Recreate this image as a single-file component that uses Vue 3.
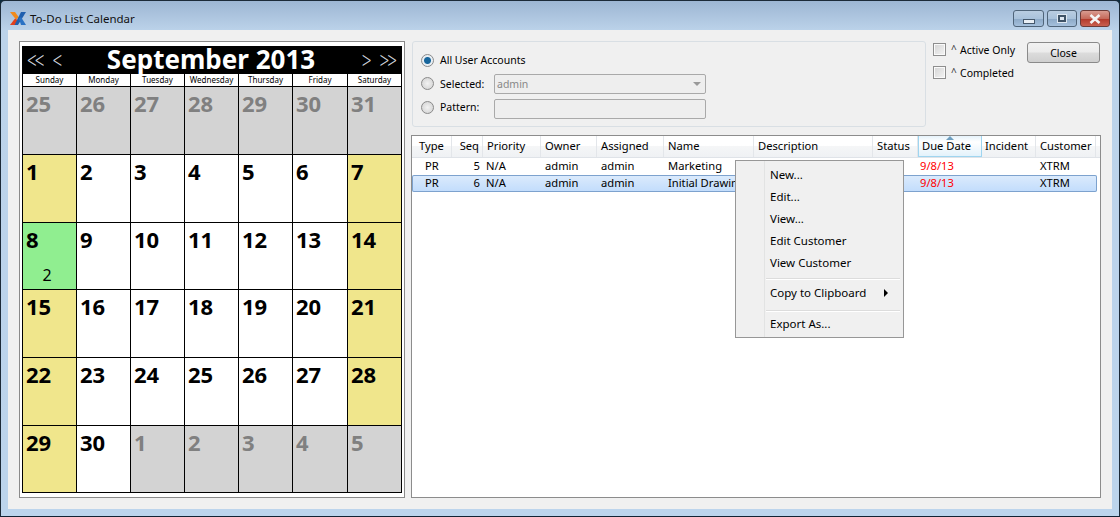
<template>
  <div class="window">
    <header class="titlebar">
      <svg class="logo" width="16" height="13" viewBox="0 0 16 14" preserveAspectRatio="none">
        <path d="M0 0h5l4 6-3 2z" fill="#f08a1c" />
        <path d="M0 14l5-7 3 2-3 5z" fill="#e2401c" />
        <path d="M16 0h-5L4.500 14h3.500z" fill="#1f5fae" />
        <path d="M9 7l2-1.500 5 8.500h-5z" fill="#2a72c4" />
      </svg>
      <span class="title">To-Do List Calendar</span>
      <div class="controls">
        <button class="ctl" type="button"><i class="min"></i></button>
        <button class="ctl ctl-max" type="button"><i class="max"></i></button>
        <button class="ctl close-x" type="button">
          <svg width="12" height="10" viewBox="0 0 12 10"><path d="M1.500 1l9 8M10.500 1l-9 8" stroke="#f4f4f4" stroke-width="2.600" /></svg>
        </button>
      </div>
    </header>

    <main class="body">
      <section class="cal-panel">
        <div class="calendar">
          <div class="cal-head">
            <div class="nav"><span class="dbl">&lt;&lt;</span><span>&lt;</span></div>
            <div class="month">September 2013</div>
            <div class="nav"><span>&gt;</span><span class="dbl">&gt;&gt;</span></div>
          </div>
          <div class="day-names">
            <div v-for="d in dayNames" :key="d">{{ d }}</div>
          </div>
          <div class="days">
            <div v-for="c in cells" :key="c.key" class="day" :class="c.kind">
              <span class="num">{{ c.n }}</span>
              <span v-if="c.count" class="count">{{ c.count }}</span>
            </div>
          </div>
        </div>
      </section>

      <section class="right">
        <div class="top">
          <div class="group">
            <div class="radio-row first">
              <span class="radio on"></span><label>All User Accounts</label>
            </div>
            <div class="radio-row">
              <span class="radio"></span><label class="lab">Selected:</label>
              <div class="field">admin<i class="caret"></i></div>
            </div>
            <div class="radio-row">
              <span class="radio up"></span><label class="lab up">Pattern:</label>
              <div class="field"></div>
            </div>
          </div>
          <div class="checks">
            <div class="check"><span class="box"></span><span class="hat">^</span>Active Only</div>
            <div class="check"><span class="box"></span><span class="hat">^</span>Completed</div>
          </div>
          <button class="close-btn" type="button">Close</button>
        </div>

        <div class="table">
          <div class="thead">
            <div
              v-for="c in columns"
              :key="c.name"
              class="th"
              :class="{ sorted: c.name === 'Due Date' }"
              :style="{ width: c.w + 'px' }"
            >{{ c.name }}</div>
          </div>
          <div
            v-for="r in rows"
            :key="r.seq"
            class="tr"
            :class="{ selected: r.selected }"
          >
            <div class="td c-type" style="width: 40px">PR</div>
            <div class="td c-seq" style="width: 31px">{{ r.seq }}</div>
            <div class="td" style="width: 58px">N/A</div>
            <div class="td pad" style="width: 56px">admin</div>
            <div class="td pad" style="width: 67px">admin</div>
            <div class="td pad" style="width: 90px">{{ r.name }}</div>
            <div class="td" style="width: 119px"></div>
            <div class="td" style="width: 45px"></div>
            <div class="td due" style="width: 64px">9/8/13</div>
            <div class="td" style="width: 54px"></div>
            <div class="td pad" style="width: 57px">XTRM</div>
          </div>

          <div class="menu">
            <template v-for="m in menu" :key="m.label">
              <div v-if="m.sep" class="sep" :class="m.sep"></div>
              <div class="item">
                {{ m.label }}
                <i v-if="m.sub" class="arrow"></i>
              </div>
            </template>
          </div>
        </div>
      </section>
    </main>
  </div>
</template>

<script setup>
const dayNames = ['Sunday', 'Monday', 'Tuesday', 'Wednesday', 'Thursday', 'Friday', 'Saturday']

const columns = [
  { name: 'Type', w: 40 },
  { name: 'Seq', w: 31 },
  { name: 'Priority', w: 58 },
  { name: 'Owner', w: 56 },
  { name: 'Assigned', w: 67 },
  { name: 'Name', w: 90 },
  { name: 'Description', w: 119 },
  { name: 'Status', w: 45 },
  { name: 'Due Date', w: 64 },
  { name: 'Incident', w: 54 },
  { name: 'Customer', w: 60 }
]

const rows = [
  { seq: 5, name: 'Marketing' },
  { seq: 6, name: 'Initial Drawing', selected: true }
]

const menu = [
  { label: 'New...' },
  { label: 'Edit...' },
  { label: 'View...' },
  { label: 'Edit Customer' },
  { label: 'View Customer' },
  { label: 'Copy to Clipboard', sep: 'sep-a', sub: true },
  { label: 'Export As...', sep: 'sep-b' }
]

// 6 weeks, Sep 2013 starts on a Sunday
const cells = []
for (const n of [25, 26, 27, 28, 29, 30, 31]) cells.push({ key: 'a' + n, n, kind: 'other' })
for (let n = 1; n <= 30; n++) {
  const dow = (n - 1) % 7
  let kind = dow === 0 || dow === 6 ? 'weekend' : ''
  if (n === 8) kind = 'today'
  cells.push({ key: 'b' + n, n, kind, count: n === 8 ? 2 : 0 })
}
for (const n of [1, 2, 3, 4, 5]) cells.push({ key: 'c' + n, n, kind: 'other' })
</script>

<style>
html, body {
  margin: 0;
  background: #0d2b3e;
}
</style>

<style scoped>
.window {
  width: 1120px;
  height: 517px;
  box-sizing: border-box;
  display: flex;
  flex-direction: column;
  background: linear-gradient(#9db6d3 0, #bcd3ea 30px, #bcd4ec 100%);
  border: 1px solid #1c2a38;
  border-bottom-color: #123;
  border-radius: 5px 5px 0 0;
  font-family: "Noto Sans", sans-serif;
  font-size: 11.2px;
  color: #000;
  overflow: hidden;
}

.titlebar {
  height: 29px;
  flex: none;
  display: flex;
  align-items: center;
  padding: 6px 0 0 9px;
  box-sizing: border-box;
}

.title {
  margin-left: 4px;
  font-size: 11.5px;
  color: #111;
}

.controls {
  margin-left: auto;
  margin-right: 9px;
  display: flex;
  gap: 3px;
}

.ctl {
  width: 31px;
  height: 17px;
  padding: 0;
  display: flex;
  align-items: center;
  justify-content: center;
  border: 1px solid #4f6479;
  border-radius: 3px;
  background: linear-gradient(#b9cde1, #a9c2db 50%, #8ca9c7 52%, #a5c0dc);
}

.ctl-max {
  width: 30px;
}

.ctl.close-x {
  width: 30px;
  border-color: #6d3a36;
  background: linear-gradient(#d99b90, #c66a5b 50%, #b2382a 52%, #c9604f);
}

.min {
  display: block;
  width: 10px;
  height: 3px;
  margin-top: 5px;
  background: #e9eff5;
  border: 1px solid #45586c;
}

.max {
  display: block;
  width: 4px;
  height: 3px;
  background: #dde7f1;
  border: 2px solid #3f5367;
  outline: 1px solid #dde7f1;
}

.body {
  flex: 1;
  margin: 0 7px 7px;
  background: #f0f0f0;
  display: flex;
  padding: 11px;
  gap: 6px;
}

.cal-panel {
  width: 386px;
  height: 457px;
  flex: none;
  box-sizing: border-box;
  border: 1px solid #8a8a8a;
  background: #fff;
  padding: 4px 2px;
}

.calendar {
  width: 380px;
  height: 447px;
  background: #000;
}

.cal-head {
  height: 27px;
  padding-bottom: 1px;
  display: flex;
  align-items: center;
  justify-content: space-between;
  padding-left: 5px;
  padding-right: 5px;
  color: #fff;
}

.month {
  font-weight: 700;
  font-size: 26px;
  line-height: 27px;
}

.nav {
  display: flex;
  gap: 10px;
  font-size: 17px;
  font-weight: 300;
  color: #cfd4dc;
  width: 69px;
}

.nav:last-child {
  justify-content: flex-end;
  gap: 8px;
  margin-right: 2px;
}

.nav span {
  display: inline-block;
  transform: scaleY(1.4);
}

.nav .dbl {
  letter-spacing: -2px;
}

.day-names {
  display: grid;
  grid-template-columns: repeat(5, 53px) 54px 53px;
  column-gap: 1px;
  padding: 0 1px;
  height: 12px;
  margin-bottom: 1px;
}

.day-names div {
  background: #fff;
  font-size: 8px;
  line-height: 12px;
  text-align: center;
}

.days {
  display: grid;
  grid-template-columns: repeat(5, 53px) 54px 53px;
  grid-template-rows: 67px 67px 66px 67px 67px 66px;
  gap: 1px;
  padding: 0 1px;
}

.day {
  background: #fff;
  padding: 4px 0 0 3px;
}

.num {
  display: block;
  font-weight: 700;
  font-size: 22px;
  line-height: 24px;
}

.other {
  background: #d3d3d3;
  color: #808080;
}

.weekend {
  background: #f0e68c;
}

.today {
  background: #90ee90;
}

.count {
  display: block;
  margin-top: 15px;
  padding-right: 8px;
  text-align: center;
  font-size: 16px;
  line-height: 18px;
}

.right {
  flex: 1;
  min-width: 0;
}

.top {
  height: 94px;
  display: flex;
  align-items: flex-start;
}

.group {
  width: 514px;
  height: 86px;
  box-sizing: border-box;
  border: 1px solid #d9dfe4;
  border-radius: 3px;
  padding: 11px 0 0 8px;
  margin-left: 1px;
  font-size: 10.5px;
}

.radio-row {
  height: 25px;
  display: flex;
  align-items: center;
}

.radio-row.first {
  height: 22px;
  margin-top: -4px;
}

.radio {
  width: 11px;
  height: 11px;
  border-radius: 50%;
  border: 1px solid #8a8a8a;
  background: radial-gradient(circle, #f2f2f2, #cfcfcf);
  margin-right: 6px;
  flex: none;
}

.radio.on {
  background: radial-gradient(circle, #17669c 0 3px, #e8eef3 4px);
}

.up {
  margin-top: -3px;
}

.lab {
  width: 54px;
}

.field {
  width: 212px;
  height: 20px;
  box-sizing: border-box;
  border: 1px solid #a9a9a9;
  border-radius: 2px;
  background: #eee;
  color: #888;
  line-height: 18px;
  padding-left: 2px;
  position: relative;
}

.caret {
  position: absolute;
  right: 4px;
  top: 7px;
  border-left: 4px solid transparent;
  border-right: 4px solid transparent;
  border-top: 4px solid #999;
}

.checks {
  width: 94px;
  margin-left: 7px;
  margin-top: -3px;
  font-size: 10.5px;
}

.check {
  height: 23px;
  display: flex;
  align-items: center;
  white-space: nowrap;
}

.box {
  width: 11px;
  height: 11px;
  border: 1px solid #8e8e8e;
  background: linear-gradient(135deg, #d4d4d4, #f4f4f4);
  box-shadow: inset 0 0 0 1px #fafafa;
  margin-right: 5px;
  flex: none;
}

.hat {
  width: 9px;
  font-size: 10px;
  margin-top: -2px;
  color: #333;
}

.close-btn {
  width: 73px;
  height: 21px;
  margin-top: 1px;
  box-sizing: border-box;
  padding: 0;
  border: 1px solid #8a8a8a;
  border-radius: 3px;
  background: linear-gradient(#f2f2f2, #ebebeb 48%, #dcdcdc 52%, #cfcfcf);
  font-family: inherit;
  font-size: 10.5px;
  color: #000;
}

.table {
  width: 690px;
  height: 363px;
  box-sizing: border-box;
  border: 1px solid #8c8c8c;
  background: #fff;
  position: relative;
}

.thead {
  display: flex;
  height: 21px;
  background: linear-gradient(#fff 45%, #f5f6f7 50%, #eff1f4);
  border-bottom: 1px solid #dfe3e8;
}

.th {
  box-sizing: border-box;
  border-right: 1px solid #e3e6ea;
  padding-left: 7px;
  line-height: 20px;
  white-space: nowrap;
  flex: none;
  overflow: hidden;
}

.th:nth-child(2) {
  text-align: right;
  padding-right: 3px;
}

.th:nth-child(n + 3) {
  padding-left: 4px;
}

.th:nth-child(10) {
  padding-left: 3px;
}

.th.sorted {
  background: linear-gradient(#e6f3fb, #fff 30%, #e3f2fb);
  border: 1px solid #9fd5f0;
  border-top: 0;
  padding-left: 3px;
  position: relative;
}

.th.sorted::before {
  content: "";
  position: absolute;
  left: 27px;
  top: 0;
  border-left: 4px solid transparent;
  border-right: 4px solid transparent;
  border-bottom: 4px solid #6f9fc0;
}

.tr {
  display: flex;
  height: 17px;
  line-height: 15px;
  box-sizing: border-box;
}

.tr.selected {
  width: 685px;
  border-radius: 2px;
  box-shadow: inset 0 0 0 1px #7da2ce;
  background: linear-gradient(#dcebfc, #c1dcfc);
}

.td {
  flex: none;
  box-sizing: border-box;
  padding-left: 3px;
  white-space: nowrap;
  overflow: hidden;
}

.td.pad {
  padding-left: 4px;
}

.td.c-type {
  padding-left: 13px;
}

.td.c-seq {
  text-align: right;
  padding-right: 3px;
}

.td.due {
  color: #f00;
  padding-left: 2px;
}

.menu {
  position: absolute;
  left: 323px;
  top: 24px;
  width: 169px;
  height: 178px;
  box-sizing: border-box;
  border: 1px solid #979797;
  background: linear-gradient(90deg, #f0f0f0 28px, #e2e3e3 28px, #e2e3e3 29px, #f0f0f0 29px);
  padding: 3px 2px 2px;
  font-size: 11.5px;
}

.item {
  height: 22px;
  line-height: 22px;
  padding-left: 32px;
  position: relative;
}

.sep {
  height: 1px;
  margin-left: 28px;
  margin-right: 1px;
  background: #dcdcdc;
  border-bottom: 1px solid #fff;
}

.sep-a {
  margin-top: 4px;
  margin-bottom: 2px;
}

.sep-b {
  margin-top: 6px;
  margin-bottom: 1px;
}

.arrow {
  position: absolute;
  right: 13px;
  top: 7px;
  border-top: 4px solid transparent;
  border-bottom: 4px solid transparent;
  border-left: 4px solid #000;
}
</style>
